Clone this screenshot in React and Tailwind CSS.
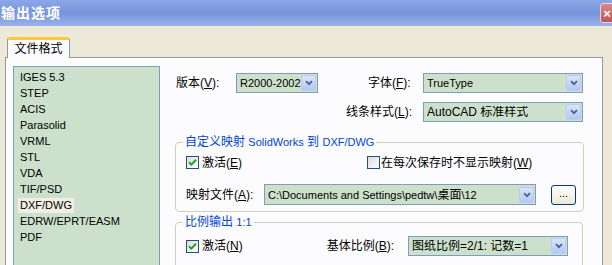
import React from 'react';

const FONT = "font-['Liberation_Sans','Noto_Sans_CJK_SC',sans-serif]";

const formats = ['IGES 5.3', 'STEP', 'ACIS', 'Parasolid', 'VRML', 'STL', 'VDA', 'TIF/PSD', 'DXF/DWG', 'EDRW/EPRT/EASM', 'PDF'];

// XP style combo arrow button
const Arrow = () => (
  <div className="w-[15px] h-[16px] mr-[1px] rounded-[2px] bg-gradient-to-b from-[#d9e5fd] to-[#b3c8f5] border border-[#b9cbf3] flex items-center justify-center">
    <svg width="8" height="6" viewBox="0 0 8 6">
      <path d="M1 1.2 L4 4.2 L7 1.2" fill="none" stroke="#4d6185" strokeWidth="1.8" />
    </svg>
  </div>
);

const Combo = ({ value, className }) => (
  <div className={`h-[20px] border border-[#7f9db9] bg-[#cce0cc] flex items-center justify-between pl-[3px] ${className}`}>
    <span className="text-[11px] leading-none whitespace-nowrap overflow-hidden">{value}</span>
    <Arrow />
  </div>
);

const Check = ({ checked }) => (
  <div className="w-[13px] h-[13px] border border-[#1c5180] bg-gradient-to-br from-[#dcdcd7] to-white flex items-center justify-center">
    {checked && (
      <svg width="9" height="9" viewBox="0 0 9 9">
        <path d="M1 4.2 L3.4 6.6 L8 1.8" fill="none" stroke="#21a121" strokeWidth="2" />
      </svg>
    )}
  </div>
);

const Label = ({ children, className = '' }) => (
  <span className={`text-[12px] leading-none whitespace-nowrap text-black ${className}`}>{children}</span>
);

export default function App() {
  return (
    <div className={`w-[612px] h-[265px] overflow-hidden bg-[#ece9d8] ${FONT} text-black`}>
      {/* title bar */}
      <div className="h-[26px] bg-gradient-to-b from-[#8aa7e8] via-[#7794dc] to-[#9bb2e9] flex items-center justify-between">
        <span className="text-[14px] font-bold text-white pl-[1px] tracking-[1px]">输出选项</span>
        <div className="w-[14px] h-[20px] mr-[-2px] rounded-l-[3px] bg-gradient-to-b from-[#d98a8a] to-[#b9545a] border border-[#f0d0d0] flex items-center justify-center">
          <span className="text-white text-[13px] font-bold leading-none">×</span>
        </div>
      </div>

      {/* tab strip */}
      <div className="pt-[11px] pl-[7px] flex">
        <div className="h-[21px] w-[63px] bg-[#fcfcfe] border border-[#919b9c] border-b-0 border-t-[3px] border-t-[#ffc83c] rounded-t-[3px] flex items-center justify-center relative z-10 -mb-[1px]">
          <Label>文件格式</Label>
        </div>
      </div>

      {/* tab panel */}
      <div className="ml-[5px] w-[598px] h-[220px] bg-[#fcfcfe] border border-[#919b9c] flex pl-[7px] pt-[8px]">
        {/* format list */}
        <div className="w-[147px] h-[220px] bg-[#cce0cc] border border-[#7f9db9] pt-[2px] pl-[4px]">
          {formats.map((f) => (
            <div key={f} className="h-[16px] flex items-center">
              <span
                className={`text-[11px] leading-none px-[2px] py-[2px] ${f === 'DXF/DWG' ? 'bg-[#f1eee4]' : ''}`}
              >
                {f}
              </span>
            </div>
          ))}
        </div>

        {/* settings */}
        <div className="ml-[15px] w-[408px] pt-[7px]">
          <div className="flex items-center h-[20px]">
            <Label className="w-[61px] pl-[1px]">版本(<u>V</u>):</Label>
            <Combo value="R2000-2002" className="w-[82px]" />
            <Label className="ml-[50px] w-[55px]">字体(<u>F</u>):</Label>
            <Combo value="TrueType" className="w-[160px]" />
          </div>
          <div className="flex items-center justify-end h-[20px] mt-[9px]">
            <Label>线条样式(<u>L</u>):</Label>
            <Combo value={<span className="text-[12px]">AutoCAD 标准样式</span>} className="w-[160px] ml-[11px]" />
          </div>

          <fieldset className="mt-[13px] border border-[#d0d0bf] rounded-[4px] pl-[10px] pr-[7px] pb-[6px]">
            <legend className="ml-[-3px] px-[2px] text-[12px] leading-[14px] text-[#0046d5]">
              自定义映射 <span className="text-[11px]">SolidWorks</span> 到 <span className="text-[11px]">DXF/DWG</span>
            </legend>
            <div className="flex items-center h-[15px] mt-[6px]">
              <Check checked />
              <Label className="ml-[3px] w-[165px]">激活(<u>E</u>)</Label>
              <Check />
              <Label className="ml-[1px]">在每次保存时不显示映射(<u>W</u>)</Label>
            </div>
            <div className="flex items-center mt-[14px]">
              <Label className="w-[78px]">映射文件(<u>A</u>):</Label>
              <Combo
                value={<span className="text-[11px]">C:\Documents and Settings\pedtw\<span className="text-[12px]">桌面</span>\12</span>}
                className="w-[272px] h-[21px]"
              />
              <div className="ml-[15px] w-[25px] h-[20px] rounded-[3px] border border-[#003c74] bg-gradient-to-b from-white to-[#ece9d8] flex items-center justify-center">
                <span className="text-[11px] leading-none mt-[-3px]">...</span>
              </div>
            </div>
          </fieldset>

          <fieldset className="mt-[3px] border border-[#d0d0bf] rounded-[4px] pl-[10px] pr-[14px] pb-[10px]">
            <legend className="ml-[-3px] px-[2px] text-[12px] leading-[14px] text-[#0046d5]">
              比例输出 <span className="text-[11px]">1:1</span>
            </legend>
            <div className="flex items-center h-[24px] mt-[5px]">
              <Check checked />
              <Label className="ml-[3px]">激活(<u>N</u>)</Label>
              <Label className="ml-auto mr-[14px]">基体比例(<u>B</u>):</Label>
              <Combo value={<span className="text-[12px]">图纸比例=2/1: 记数=1</span>} className="w-[160px]" />
            </div>
          </fieldset>
        </div>
      </div>
    </div>
  );
}
